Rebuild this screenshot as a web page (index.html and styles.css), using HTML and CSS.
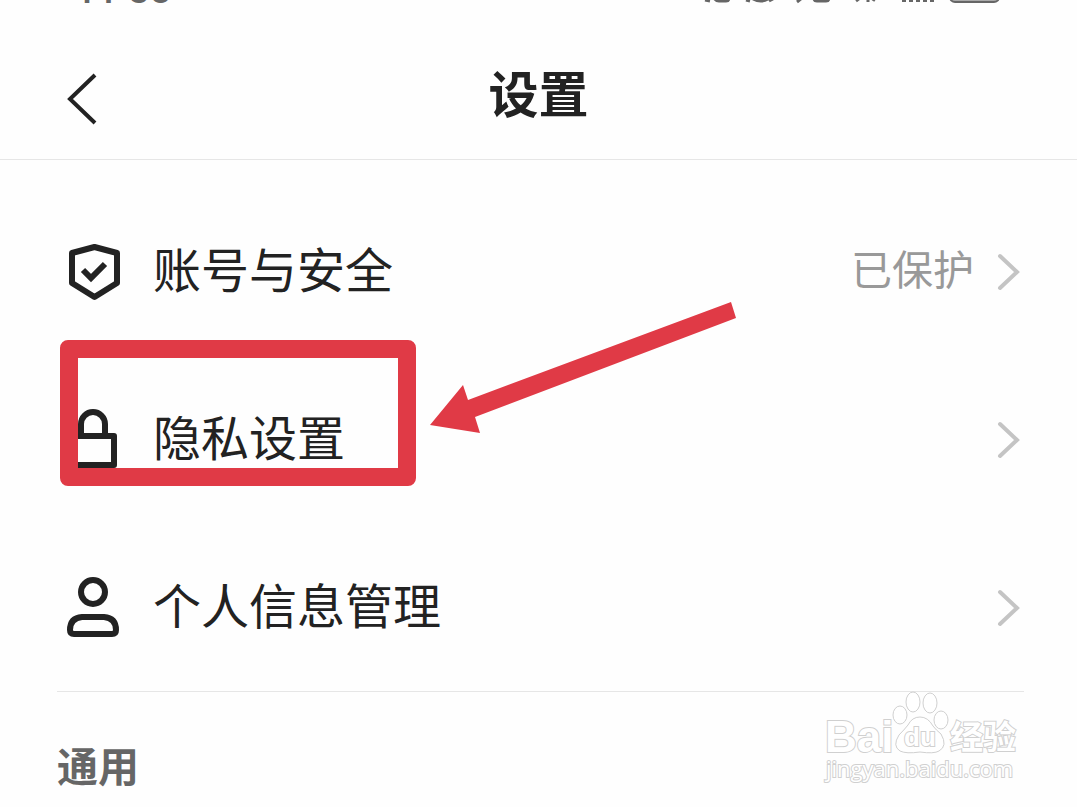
FILE: index.html
```html
<!DOCTYPE html>
<html lang="zh-CN">
<head>
<meta charset="utf-8">
<title>设置</title>
<meta name="viewport" content="width=device-width, initial-scale=1">
<link rel="stylesheet" href="styles.css">
</head>
<body>
<div class="status">
  <span class="time">11<span class="colon">:</span>38</span>
  <svg class="status-icons" width="320" height="8" viewBox="700 0 320 8" aria-hidden="true">
    <g fill="none" stroke="#666" stroke-width="3">
      <path d="M705 0l5 1M714-2q2 3 5 3h7q3 0 3-3M746 0l4 1M753-1q8 4 15 0M773-1l-4 2M797 2l5-4M814-2q0 3 3 3h9q3 0 3-3M856 1l4-3M868-2v4M875-2l-2 3"/>
      <path d="M904-2v4M911-2v4M918-2v4M925-2v4M932-2v4" stroke-width="4"/>
      <rect x="950" y="-20" width="49" height="22" rx="5" fill="#aaa" stroke-width="2"/>
    </g>
  </svg>
</div>
<header class="header">
  <button class="back" type="button" aria-label="返回">
    <svg width="40" height="60" viewBox="0 0 40 60"><path d="M33 6L8 30l25 24" /></svg>
  </button>
  <h1 class="title">设置</h1>
</header>
<main>
  <nav class="list">
    <a class="row" href="#account">
      <svg class="icon" width="72" height="72" viewBox="0 0 72 72">
        <path d="M37.500 11L60 17V47L37.500 61L15 47V17Z"/>
        <path d="M26 34l8 8 14-14" class="check"/>
      </svg>
      <span class="label">账号与安全</span>
      <span class="value">已保护</span>
      <svg class="chevron" width="32" height="48" viewBox="0 0 32 48"><path d="M8 8l17 16L8 40"/></svg>
    </a>
    <a class="row" href="#privacy">
      <svg class="icon" width="72" height="72" viewBox="0 0 72 72">
        <path d="M24 33V20a12 12 0 0 1 24 0V33"/>
        <rect x="15" y="32" width="42" height="29"/>
      </svg>
      <span class="label">隐私设置</span>
      <svg class="chevron" width="32" height="48" viewBox="0 0 32 48"><path d="M8 8l17 16L8 40"/></svg>
      <span class="highlight"></span>
      <svg class="arrow" width="310" height="136" viewBox="0 0 310 136" aria-hidden="true"><path d="M0 125L33 85L38 100L301 2L306 18L45 117L50 133Z"/></svg>
    </a>
    <a class="row" href="#profile">
      <svg class="icon" width="72" height="72" viewBox="0 0 72 72">
        <circle cx="36" cy="20" r="12"/>
        <path d="M25 45H47Q59 46 59 58Q59 62 55 62H17Q13 62 13 58Q13 46 25 45Z"/>
      </svg>
      <span class="label">个人信息管理</span>
      <svg class="chevron" width="32" height="48" viewBox="0 0 32 48"><path d="M8 8l17 16L8 40"/></svg>
    </a>
  </nav>
  <h2 class="section">通用</h2>
</main>
<svg class="watermark" width="210" height="104" viewBox="820 686 210 104" role="img" aria-label="Baidu 经验">
  <text class="wm-bai" x="825" y="752">Bai</text>
  <ellipse cx="900" cy="715" rx="7" ry="9"/>
  <ellipse cx="913" cy="702" rx="7" ry="10"/>
  <ellipse cx="930" cy="703" rx="7" ry="10"/>
  <ellipse cx="941" cy="720" rx="7" ry="9"/>
  <path d="M920 717Q928 717 933 726Q936 730 941 734Q948 746 939 751Q934 754 920 752Q906 754 900 751Q892 746 899 735Q904 730 908 725Q912 717 920 717Z"/>
  <text class="wm-du" x="904" y="746">du</text>
  <text class="wm-cn" x="950" y="749">经验</text>
  <text class="wm-url" x="826" y="777">jingyan.baidu.com</text>
</svg>
</body>
</html>
```
FILE: styles.css
```css
* { box-sizing: border-box; }
body {
  margin: 0;
  position: relative;
  min-height: 100vh;
  overflow: hidden;
  background: #fefefe;
  color: #222;
  font-family: "Noto Sans CJK SC", sans-serif;
}
.status {
  display: flex;
  justify-content: space-between;
  align-items: flex-end;
  height: 8px;
  padding: 0 57px 0 75px;
  overflow: hidden;
}
.time {
  padding-bottom: 4px;
  font: 500 38px/28px Roboto, sans-serif;
  color: #666;
}
.colon { vertical-align: 6px; line-height: 1px; }
.status-icons { flex: none; }
.header {
  display: grid;
  grid-template-columns: 104px 1fr 104px;
  align-items: center;
  height: 152px;
  border-bottom: 1px solid #e6e6e6;
}
.back {
  justify-self: end;
  width: 44px;
  height: 60px;
  margin-top: 30px;
  padding: 0;
  border: 0;
  background: none;
}
.back path { fill: none; stroke: #222; stroke-width: 4; }
.title {
  margin: 14px 0 0;
  font-size: 50px;
  line-height: 64px;
  font-weight: 700;
  text-align: center;
}
.list {
  margin: 0 53px 0 57px;
  padding-top: 28px;
  border-bottom: 1px solid #e6e6e6;
}
.row {
  position: relative;
  display: flex;
  align-items: center;
  height: 168px;
  color: #222;
  text-decoration: none;
}
.row:last-child { height: 167px; }
.icon { flex: none; margin-right: 24px; }
.icon * { fill: none; stroke: #222; stroke-width: 6; stroke-linejoin: round; }
.icon .check { stroke-linejoin: miter; }
.label { flex: 1; padding-bottom: 10px; font-size: 48px; line-height: 72px; }
.value { margin-right: 18px; padding-bottom: 10px; font-size: 41px; line-height: 60px; color: #999; }
.chevron { flex: none; }
.chevron path { fill: none; stroke: #c4c4c4; stroke-width: 4; stroke-linecap: round; }
.highlight {
  position: absolute;
  top: -16px;
  left: 3px;
  width: 356px;
  height: 146px;
  border: 18px solid #e03a46;
  border-radius: 8px;
}
.arrow { position: absolute; top: -56px; left: 373px; fill: #e03a46; }
.section {
  margin: 42px 57px 0;
  font-size: 41px;
  line-height: 60px;
  font-weight: 700;
  color: #666;
}
.watermark {
  position: absolute;
  right: 47px;
  bottom: 17px;
  fill: #fff;
  stroke: #d0d0d0;
  stroke-width: 1;
}
.watermark text { paint-order: stroke; stroke-width: 2; font-weight: 700; }
.wm-bai { font-family: "Liberation Sans", sans-serif; font-size: 44px; }
.wm-du { font-family: "Liberation Sans", sans-serif; font-size: 26px; }
.wm-cn { font-size: 33px; }
.watermark .wm-url { font-family: "Open Sans", sans-serif; font-size: 22px; font-weight: 400; }
```
